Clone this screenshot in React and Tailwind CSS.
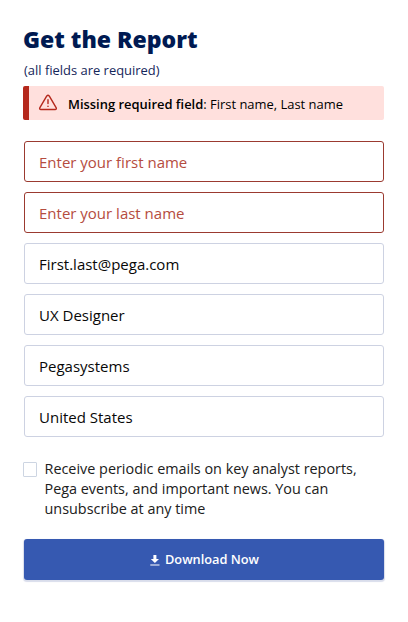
const fields = [
  { value: "", placeholder: "Enter your first name", label: "First name" },
  { value: "", placeholder: "Enter your last name", label: "Last name" },
  { value: "First.last@pega.com", label: "Email" },
  { value: "UX Designer", label: "Job title" },
  { value: "Pegasystems", label: "Company" },
  { value: "United States", label: "Country" },
];

function WarningIcon() {
  return (
    <svg width="20" height="18" viewBox="0 0 20 18" fill="none" stroke="#b5281c" strokeWidth="1.4" strokeLinejoin="round" strokeLinecap="round">
      <path d="M8.8 1.9 1.9 13.6Q1.1 15.5 2.9 15.5H17.1Q18.9 15.5 18.1 13.6L11.2 1.9Q10 .8 8.8 1.9Z" />
      <path d="M10 5.7V9.5M10 12.2V12.4" />
    </svg>
  );
}

function DownloadIcon() {
  return (
    <svg width="10" height="11" viewBox="0 0 10 11" fill="#fff">
      <path d="M3.4 0H6.4V4H9L4.9 8 .8 4H3.4ZM.3 9.4H9.5V10.6H.3Z" />
    </svg>
  );
}

export default function App() {
  return (
    <form className="flex h-[622px] w-[408px] flex-col bg-white pl-6 pr-6 pt-[23px] font-['Open_Sans','Noto_Sans',sans-serif]">
      <h1 className="-ml-px h-8 whitespace-nowrap text-[23px] leading-8 font-extrabold text-[#001a52]">Get the Report</h1>
      <p className="mt-[6px] h-[18px] text-[12.95px] leading-[18px] text-[#14265a]">(all fields are required)</p>
      <div className="mt-[7px] -ml-px flex h-[34px] shrink-0 items-center rounded-[2px] border-l-6 border-[#b5281c] bg-[#ffe0dd] pl-[9px] text-[12.95px] text-black">
        <WarningIcon />
        <p className="ml-[10px] whitespace-nowrap pt-[3px]">
          <span className="font-semibold">Missing required field</span>: First name, Last name
        </p>
      </div>
      <div className="mt-[21px] flex flex-col gap-[10px]">
        {fields.map((f) => (
          <input
            key={f.label}
            aria-label={f.label}
            defaultValue={f.value}
            placeholder={f.placeholder}
            className={`block h-[41px] w-full rounded-[3px] border bg-white px-[14px] pt-px text-[15px] text-[#080808] placeholder:text-[#b54c40] ${f.value ? "border-[#cdd2e2]" : "border-[#9b3a30]"}`}
          />
        ))}
      </div>
      <label className="mt-[22px] -ml-px flex h-[60px]">
        <span className="mt-[3px] h-[15px] w-[14px] shrink-0 rounded-[1px] border border-[#cdd5e2]" />
        <span className="ml-[7.5px] whitespace-nowrap text-[14.4px] leading-5 text-[#202020]">
          Receive periodic emails on key analyst reports,
          <br />
          Pega events, and important news. You can
          <br />
          unsubscribe at any time
        </span>
      </label>
      <button type="button" className="mt-5 flex h-[41px] shrink-0 items-center justify-center gap-[5px] rounded-[3px] bg-[#3659b1] pl-px pt-px text-[12.8px] font-semibold text-white shadow-[0_1px_1px_1px_#d9ddeb]">
        <DownloadIcon />
        Download Now
      </button>
    </form>
  );
}
